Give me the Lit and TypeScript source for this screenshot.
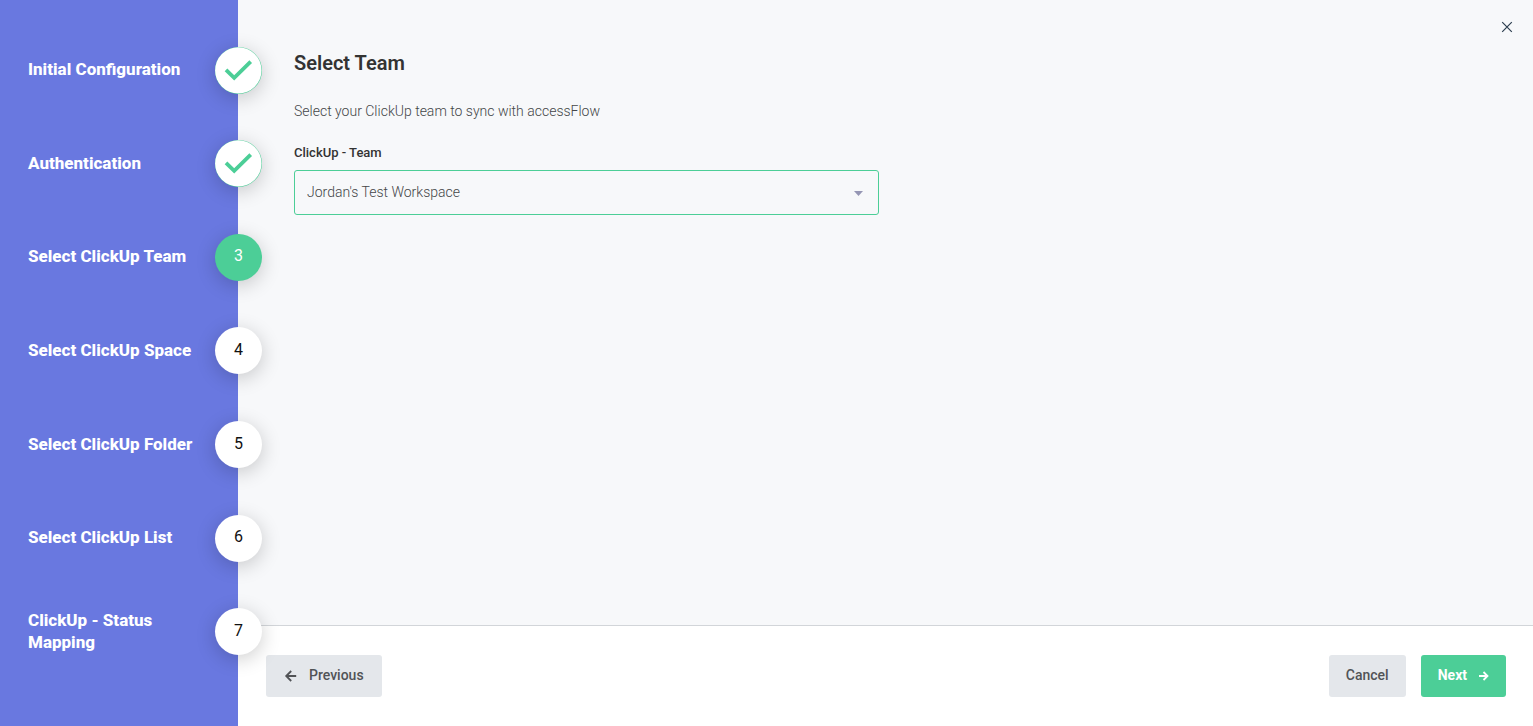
import { LitElement, html, css, svg } from "lit";
import { customElement, property, state } from "lit/decorators.js";
import { classMap } from "lit/directives/class-map.js";

const STEPS = [
  "Initial Configuration",
  "Authentication",
  "Select ClickUp Team",
  "Select ClickUp Space",
  "Select ClickUp Folder",
  "Select ClickUp List",
  "ClickUp - Status Mapping",
];

const arrow = (path: string) => svg`<path d=${path} fill="none" stroke="currentColor" stroke-width="1.8" />`;

@customElement("wizard-steps")
class WizardSteps extends LitElement {
  @property({ type: Number }) current = 1;

  static styles = css`
    :host {
      display: block;
      background: #6978e0;
    }
    .list {
      box-sizing: border-box;
      height: 100%;
      margin: 0;
      padding: 47px 0 71px 28px;
      list-style: none;
      display: flex;
      flex-direction: column;
      justify-content: space-between;
      gap: 12px;
    }
    .step {
      display: flex;
      align-items: center;
      justify-content: space-between;
      height: 46px;
      margin-right: -24px;
    }
    .label {
      max-width: 170px;
      padding-bottom: 2px;
      color: #fff;
      font-size: 17px;
      font-weight: 800;
      line-height: 22px;
    }
    .badge {
      box-sizing: border-box;
      flex: none;
      display: flex;
      align-items: center;
      justify-content: center;
      width: 47px;
      height: 47px;
      padding-bottom: 2px;
      border-radius: 50%;
      background: #fff;
      color: #111;
      font-size: 16px;
      line-height: 20px;
      box-shadow: 0 4px 20px rgba(0, 0, 0, 0.2);
    }
    .done {
      padding: 0;
      background: #4cce97;
      color: #4cce97;
    }
    .active {
      background: #4cce97;
      color: #fff;
    }
  `;

  render() {
    return html`
      <ol class="list">
        ${STEPS.map((label, i) => {
          const n = i + 1;
          const done = n < this.current;
          return html`
            <li class="step" aria-current=${n === this.current ? "step" : "false"}>
              <span class="label">${label}</span>
              <span class=${classMap({ badge: true, done, active: n === this.current })}>
                ${done
                  ? html`<svg width="47" height="47" viewBox="0 0 47 47" role="img" aria-label="Completed">
                      <circle cx="23.3" cy="23.4" r="23.2" fill="#fff" />
                      <path d="M11 22.8L19.2 30.8L35.7 14.6" fill="none" stroke="currentColor" stroke-width="3.8" />
                    </svg>`
                  : n}
              </span>
            </li>
          `;
        })}
      </ol>
    `;
  }
}

@customElement("app-root")
class AppRoot extends LitElement {
  @state() private team = "Jordan's Test Workspace";

  static styles = css`
    :host {
      display: grid;
      grid-template-columns: 238px 1fr;
      min-height: 100vh;
      font-family: Roboto, sans-serif;
      color: #333;
    }
    .steps {
      position: relative;
      z-index: 1;
    }
    .page {
      display: flex;
      flex-direction: column;
      background: #f7f8fa;
    }
    .content {
      position: relative;
      flex: 1;
      padding: 50px 56px 24px;
    }
    .title {
      margin: 0;
      font-size: 20px;
      font-weight: 600;
      line-height: 26px;
    }
    .intro {
      margin: 25px 0 0;
      color: #444648;
      font-size: 14px;
      font-weight: 300;
      line-height: 20px;
    }
    .field {
      display: flex;
      flex-direction: column;
      gap: 9px;
      max-width: 585px;
      margin-top: 23px;
    }
    .field-label {
      font-size: 13px;
      font-weight: 500;
      line-height: 17px;
    }
    .control {
      display: grid;
      align-items: center;
    }
    .select {
      grid-area: 1 / 1;
      appearance: none;
      box-sizing: border-box;
      width: 100%;
      height: 45px;
      padding: 0 40px 2px 12px;
      border: 1px solid #4cce97;
      border-radius: 3px;
      outline: none;
      background: transparent;
      color: #444648;
      font: 300 14px/20px Roboto, sans-serif;
    }
    .caret {
      grid-area: 1 / 1;
      justify-self: end;
      margin: 2px 16px 0 0;
      pointer-events: none;
    }
    .close {
      position: absolute;
      top: 16px;
      right: 15px;
      display: flex;
      align-items: center;
      justify-content: center;
      width: 22px;
      height: 22px;
      padding: 0;
      border: 0;
      background: none;
      color: #2d3e50;
      cursor: pointer;
    }
    .footer {
      display: flex;
      gap: 15px;
      padding: 29px 27px 29px 28px;
      border-top: 1px solid #d2d5d9;
      background: #fff;
    }
    .button {
      display: flex;
      align-items: center;
      height: 42px;
      padding: 0 17px 2px;
      border: 0;
      border-radius: 3px;
      background: #e4e7eb;
      color: #515356;
      font: 500 14px/20px Roboto, sans-serif;
      cursor: pointer;
    }
    .icon {
      margin-top: 2px;
    }
    .previous {
      gap: 11px;
      padding: 0 18px 2px;
      margin-right: auto;
    }
    .next {
      gap: 11px;
      background: #4cce97;
      color: #fff;
      font-weight: 700;
    }
  `;

  render() {
    return html`
      <wizard-steps class="steps" .current=${3}></wizard-steps>
      <div class="page">
        <main class="content">
          <button class="close" type="button" aria-label="Close">
            <svg width="12" height="12" viewBox="0 0 12 12">
              <path d="M1.2 1.2L10.8 10.8M10.8 1.2L1.2 10.8" stroke="currentColor" stroke-width="1.2" />
            </svg>
          </button>
          <h1 class="title">Select Team</h1>
          <p class="intro">Select your ClickUp team to sync with accessFlow</p>
          <div class="field">
            <label class="field-label" for="team">ClickUp - Team</label>
            <div class="control">
              <select
                class="select"
                id="team"
                @change=${(e: Event) => (this.team = (e.target as HTMLSelectElement).value)}
              >
                <option>${this.team}</option>
              </select>
              <svg class="caret" width="9" height="5" viewBox="0 0 9 5" aria-hidden="true">
                <path d="M0 0H9L4.5 5Z" fill="#9596b4" />
              </svg>
            </div>
          </div>
        </main>
        <footer class="footer">
          <button class="button previous" type="button">
            <svg class="icon" width="14" height="12" viewBox="0 0 14 12" aria-hidden="true">
              ${arrow("M12.2 6H2.5M7.2 1L2.2 6L7.2 11")}
            </svg>
            Previous
          </button>
          <button class="button" type="button">Cancel</button>
          <button class="button next" type="button">
            Next
            <svg class="icon" width="11" height="10" viewBox="0 0 11 10" aria-hidden="true">
              ${arrow("M1 5H9.5M5.5 1L9.5 5L5.5 9")}
            </svg>
          </button>
        </footer>
      </div>
    `;
  }
}
